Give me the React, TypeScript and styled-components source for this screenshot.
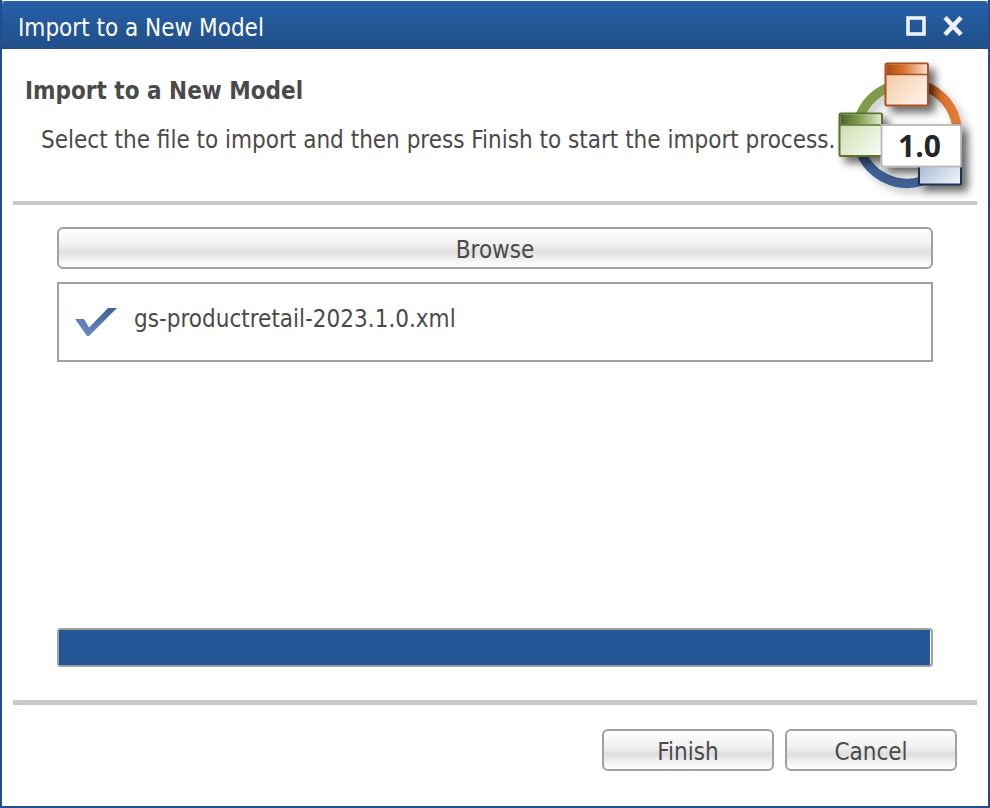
import React from "react";
import styled, { createGlobalStyle } from "styled-components";

const GlobalStyle = createGlobalStyle`
  *, *::before, *::after { box-sizing: border-box; }
  body {
    margin: 0;
    background: #fff;
    color: #4a4a4a;
    font-family: Tahoma, "DejaVu Sans Condensed", "Noto Sans", sans-serif;
    font-size: 24px;
    line-height: 28px;
  }
`;

const Dialog = styled.section`
  display: flex;
  flex-direction: column;
  min-height: 100vh;
  padding-top: 1px;
  border: 2px solid #1f4f8e;
  border-top: 0;
  background: #fff;
`;

const TitleFrame = styled.div`
  background: #6f8fb8;
`;

const TitleBar = styled.header`
  display: flex;
  align-items: center;
  justify-content: space-between;
  height: 48px;
  padding: 2px 25px 0 16px;
  border-radius: 5px 5px 0 0;
  background: linear-gradient(#2660a9, #204f88);
  color: #fff;
`;

const TitleText = styled.span`
  padding-top: 4px;
`;

const WindowControls = styled.div`
  display: flex;
  gap: 17px;
`;

const WindowButton = styled.button`
  display: flex;
  padding: 0;
  border: 0;
  background: none;
  color: #edf2f9;
  cursor: pointer;
`;

const Body = styled.main`
  display: flex;
  flex: 1;
  flex-direction: column;
  padding: 0 11px;
`;

const Intro = styled.div`
  display: flex;
  justify-content: space-between;
  height: 156px;
  border-bottom: 4px solid #c9c9c9;
`;

const IntroText = styled.div`
  flex: 1;
  padding: 28px 0 0 12px;
`;

const Heading = styled.h1`
  margin: 0;
  font-size: 24px;
  font-weight: 700;
  line-height: 28px;
`;

const Description = styled.p`
  margin: 21px 0 0 16px;
  white-space: nowrap;
`;

const IconSlot = styled.div`
  display: flex;
  flex: none;
  align-items: flex-end;
  width: 141px;
  margin-left: -16px;
`;

const Content = styled.div`
  display: flex;
  flex: 1;
  flex-direction: column;
  padding: 22px 44px 33px;
`;

const Button = styled.button<{ $wide?: boolean }>`
  width: ${({ $wide }) => ($wide ? "100%" : "172px")};
  height: 42px;
  padding: 4px 0 0;
  border: 2px solid #a0a0a0;
  border-radius: 6px;
  background: linear-gradient(#fff 0%, #f0f0f0 42%, #dedede 62%, #f0f0f0 78%, #fff 100%);
  color: inherit;
  font: inherit;
  cursor: pointer;
`;

const FileList = styled.ul`
  height: 80px;
  margin: 13px 0 0;
  padding: 21px 15px;
  border: 2px solid #a0a0a0;
  list-style: none;
`;

const FileItem = styled.li`
  display: flex;
  align-items: flex-start;
  gap: 16px;
`;

const ProgressTrack = styled.div`
  height: 39px;
  margin-top: auto;
  padding-right: 1px;
  border: 2px solid #a0a0a0;
  border-radius: 4px;
`;

const ProgressFill = styled.div`
  height: 100%;
  background: #235798;
`;

const Footer = styled.footer`
  display: flex;
  justify-content: flex-end;
  gap: 11px;
  padding: 24px 20px 35px;
  border-top: 5px solid #c9c9c9;
`;

const VersionText = styled.text`
  font-family: "Open Sans", "Noto Sans", sans-serif;
  font-size: 30px;
  font-weight: 700;
`;

function MaximizeIcon() {
  return (
    <svg width="20" height="20" viewBox="0 0 20 20" aria-hidden="true">
      <rect x="2" y="2" width="16" height="16" fill="none" stroke="currentColor" strokeWidth="3.6" />
    </svg>
  );
}

function CloseIcon() {
  return (
    <svg width="20" height="20" viewBox="0 0 20 20" aria-hidden="true">
      <path d="M2 1.500 18 18.500M18 1.500 2 18.500" fill="none" stroke="currentColor" strokeWidth="4.600" />
    </svg>
  );
}

function CheckIcon() {
  return (
    <svg width="44" height="32" viewBox="0 0 44 32" aria-hidden="true">
      <defs>
        <linearGradient id="tick" x1="0" y1="1" x2="1" y2="0">
          <stop offset="0" stopColor="#7092c6" />
          <stop offset="0.5" stopColor="#5678ae" />
          <stop offset="1" stopColor="#3f6094" />
        </linearGradient>
      </defs>
      <path d="M1 14h9l5 8.500L34 3h9L15 31h-2z" fill="url(#tick)" />
    </svg>
  );
}

function ModelIcon() {
  return (
    <svg width="141" height="143" viewBox="16 8 141 143" aria-hidden="true">
      <defs>
        <filter id="shadow" x="-30%" y="-30%" width="180%" height="180%">
          <feDropShadow dx="6" dy="6" stdDeviation="4" floodColor="#000" floodOpacity="0.6" />
        </filter>
        <filter id="ringShadow" x="-30%" y="-30%" width="180%" height="180%">
          <feDropShadow dx="5" dy="5" stdDeviation="4" floodColor="#000" floodOpacity="0.22" />
        </filter>
        <linearGradient id="orangeBar"><stop offset="0" stopColor="#a94c12" /><stop offset="0.4" stopColor="#d8702a" /><stop offset="1" stopColor="#fbe0cc" /></linearGradient>
        <linearGradient id="orangePane" x2="1" y2="1"><stop offset="0" stopColor="#f2c39b" /><stop offset="1" stopColor="#fff6ef" /></linearGradient>
        <linearGradient id="greenBar"><stop offset="0" stopColor="#4c6429" /><stop offset="0.45" stopColor="#809d50" /><stop offset="1" stopColor="#dfeacb" /></linearGradient>
        <linearGradient id="greenPane" x2="1" y2="1"><stop offset="0" stopColor="#c7d9a6" /><stop offset="1" stopColor="#fafcf6" /></linearGradient>
        <linearGradient id="bluePane" x2="1" y2="1"><stop offset="0" stopColor="#8ea5c8" /><stop offset="1" stopColor="#f5f8fc" /></linearGradient>
        <linearGradient id="orangeArc"><stop offset="0" stopColor="#a94c12" /><stop offset="0.5" stopColor="#d9702b" /><stop offset="1" stopColor="#e07b37" /></linearGradient>
      </defs>
      <g fill="none" strokeWidth="9.5" filter="url(#ringShadow)">
        <path d="M39 69A50 50 0 0 1 70 37" stroke="#7f9b4c" />
        <path d="M104 36A50 50 0 0 1 137 77" stroke="url(#orangeArc)" />
        <path d="M40 100A50 50 0 0 0 102 131" stroke="#3f6093" />
      </g>
      <g filter="url(#shadow)">
        <rect x="65.500" y="13.500" width="42.500" height="42" rx="1.500" fill="url(#orangePane)" stroke="#a85122" strokeWidth="2" />
        <path d="M66.500 14.500h40.500v10h-40.500z" fill="url(#orangeBar)" />
        <path d="M66 24.500h42" stroke="#a85122" strokeWidth="1.500" />
        <rect x="19.500" y="63.500" width="42.500" height="42.500" rx="1.500" fill="url(#greenPane)" stroke="#57722f" strokeWidth="2" />
        <path d="M20.500 64.500H61v10H20.500z" fill="url(#greenBar)" />
        <path d="M20 75h42" stroke="#57722f" strokeWidth="1.500" />
        <rect x="99" y="96" width="42" height="38.500" rx="1" fill="url(#bluePane)" stroke="#1c3152" strokeWidth="2" />
        <rect x="61.500" y="75" width="79.500" height="41.500" fill="#fff" stroke="#b8b8b8" strokeWidth="1.800" />
      </g>
      <VersionText x="99.500" y="106.500" textAnchor="middle" fill="#262626">1.0</VersionText>
    </svg>
  );
}

export default function App() {
  const progress = 100;
  return (
    <>
      <GlobalStyle />
      <Dialog role="dialog" aria-label="Import to a New Model">
        <TitleFrame>
          <TitleBar>
            <TitleText>Import to a New Model</TitleText>
            <WindowControls>
              <WindowButton type="button" aria-label="Maximize"><MaximizeIcon /></WindowButton>
              <WindowButton type="button" aria-label="Close"><CloseIcon /></WindowButton>
            </WindowControls>
          </TitleBar>
        </TitleFrame>
        <Body>
          <Intro>
            <IntroText>
              <Heading>Import to a New Model</Heading>
              <Description>Select the file to import and then press Finish to start the import process.</Description>
            </IntroText>
            <IconSlot><ModelIcon /></IconSlot>
          </Intro>
          <Content>
            <Button type="button" $wide>Browse</Button>
            <FileList>
              <FileItem><CheckIcon />gs-productretail-2023.1.0.xml</FileItem>
            </FileList>
            <ProgressTrack role="progressbar" aria-label="Upload progress" aria-valuenow={progress} aria-valuemin={0} aria-valuemax={100}>
              <ProgressFill style={{ width: `${progress}%` }} />
            </ProgressTrack>
          </Content>
          <Footer>
            <Button type="button">Finish</Button>
            <Button type="button">Cancel</Button>
          </Footer>
        </Body>
      </Dialog>
    </>
  );
}
